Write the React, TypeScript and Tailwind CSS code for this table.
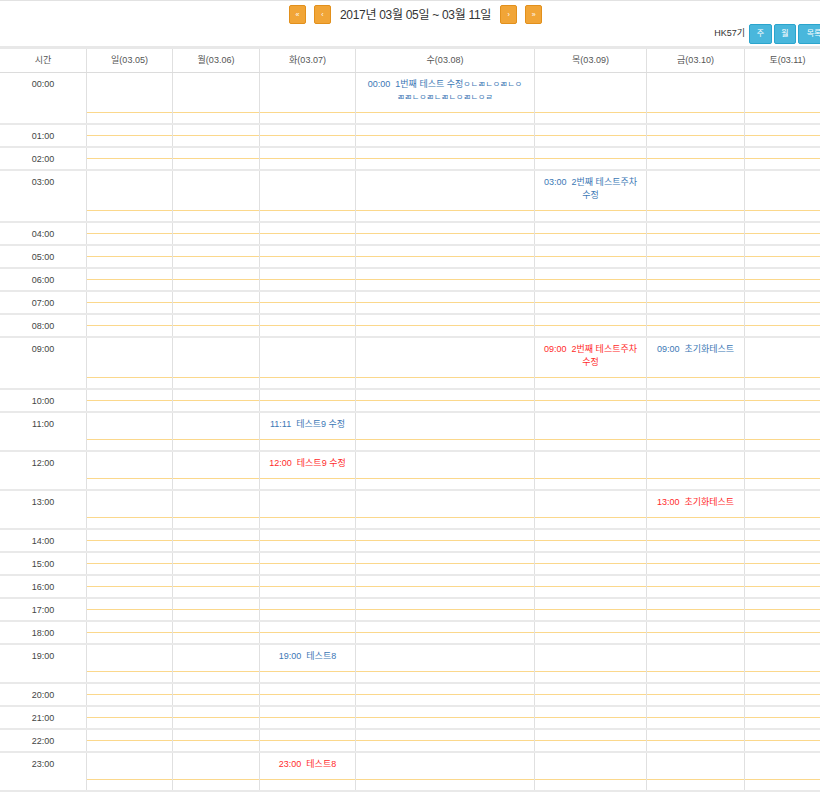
import React from "react";

type Ev = {
  day: number;
  time: string;
  title: string;
  red?: boolean;
  tail?: string;
  line2?: string;
  jamo2?: string;
};

const days = ["일(03.05)", "월(03.06)", "화(03.07)", "수(03.08)", "목(03.09)", "금(03.10)", "토(03.11)"];

const events: Record<number, Ev[]> = {
  0: [{ day: 3, time: "00:00", title: "1번째 테스트 수정", tail: "ㅇㄴㄻㄴㅇㄻㄴㅇ", jamo2: "ㄻㄻㄴㅇㄻㄴㄻㄴㅇㄻㄴㅇㄹ" }],
  3: [{ day: 4, time: "03:00", title: "2번째 테스트주차", line2: "수정" }],
  9: [
    { day: 4, time: "09:00", title: "2번째 테스트주차", line2: "수정", red: true },
    { day: 5, time: "09:00", title: "초기화테스트" },
  ],
  11: [{ day: 2, time: "11:11", title: "테스트9 수정" }],
  12: [{ day: 2, time: "12:00", title: "테스트9 수정", red: true }],
  13: [{ day: 5, time: "13:00", title: "초기화테스트", red: true }],
  19: [{ day: 2, time: "19:00", title: "테스트8" }],
  23: [{ day: 2, time: "23:00", title: "테스트8", red: true }],
};

const cols = "grid grid-cols-[87px_86px_87px_96px_179px_112px_98px_85px]";

function EventBlock({ ev }: { ev: Ev }) {
  return (
    <div className={`pt-[5px] pb-[8px] text-center leading-[13px] ${ev.red ? "text-[#ff2b2b]" : "text-[#3c78b5]"}`}>
      <div className="whitespace-nowrap">
        <span className="mr-[5px]">{ev.time}</span>
        {ev.title}
        {ev.tail && <span className="text-[8px]">{ev.tail}</span>}
      </div>
      {ev.line2 && <div>{ev.line2}</div>}
      {ev.jamo2 && <div className="text-[8px]">{ev.jamo2}</div>}
    </div>
  );
}

function OrangeBtn({ label }: { label: string }) {
  return (
    <button className="w-[17px] h-[19px] rounded-[2px] border border-[#e2901c] bg-[#f1a537] text-white text-[7px] leading-none flex items-center justify-center">
      {label}
    </button>
  );
}

function BlueBtn({ label, w }: { label: string; w: string }) {
  return (
    <button className={`${w} h-[20px] rounded-[2px] border border-[#2ba5cd] bg-[#49b7dc] text-white text-[8px] leading-none`}>
      {label}
    </button>
  );
}

export default function App() {
  return (
    <div className="w-[820px] overflow-hidden bg-white text-[9px] text-[#555] font-['Liberation_Sans','Noto_Sans_CJK_KR',sans-serif]">
      <div className="w-[830px] border-t border-[#e2e2e2]">
        <div className="flex items-center justify-center pt-[4px] h-[23px] pl-[1px]">
          <div className="flex gap-[8px]">
            <OrangeBtn label="«" />
            <OrangeBtn label="‹" />
          </div>
          <div className="mx-[9px] text-[12px] tracking-[-0.3px] text-[#333]">2017년 03월 05일 ~ 03월 11일</div>
          <div className="flex gap-[8px]">
            <OrangeBtn label="›" />
            <OrangeBtn label="»" />
          </div>
        </div>
        <div className="flex items-center justify-end gap-[2px] h-[20px] mb-[2px]">
          <span className="mr-[2px] text-[9px] text-[#333]">HK57기</span>
          <BlueBtn label="주" w="w-[23px]" />
          <BlueBtn label="월" w="w-[22px]" />
          <BlueBtn label="목록" w="w-[32px]" />
        </div>

        <div className="border-t-[3px] border-[#e8e8e8]">
          <div className={`${cols} h-[24px] border-b border-[#dcdcdc]`}>
            <div className="flex items-center justify-center border-r border-[#e0e0e0]">시간</div>
            {days.map((d, i) => (
              <div
                key={d}
                className={`flex items-center justify-center ${i < 6 ? "border-r border-[#e0e0e0]" : ""}`}
              >
                {d}
              </div>
            ))}
          </div>

          {Array.from({ length: 24 }, (_, h) => {
            const hh = String(h).padStart(2, "0");
            const evs = events[h] || [];
            return (
              <div key={h} className={`${cols} border-b-2 border-[#e9e9e9]`}>
                <div className="border-r border-[#e0e0e0] pt-[5px] text-center leading-[13px] text-[#444]">
                  {hh}:00
                </div>
                {days.map((d, i) => {
                  const ev = evs.find((e) => e.day === i);
                  return (
                    <div key={d} className={`flex flex-col ${i < 6 ? "border-r border-[#e0e0e0]" : ""}`}>
                      <div className="flex-1 min-h-[11px] border-b border-[#fbd88c]">
                        {ev && <EventBlock ev={ev} />}
                      </div>
                      <div className="h-[10px]" />
                    </div>
                  );
                })}
              </div>
            );
          })}
        </div>
      </div>
    </div>
  );
}
